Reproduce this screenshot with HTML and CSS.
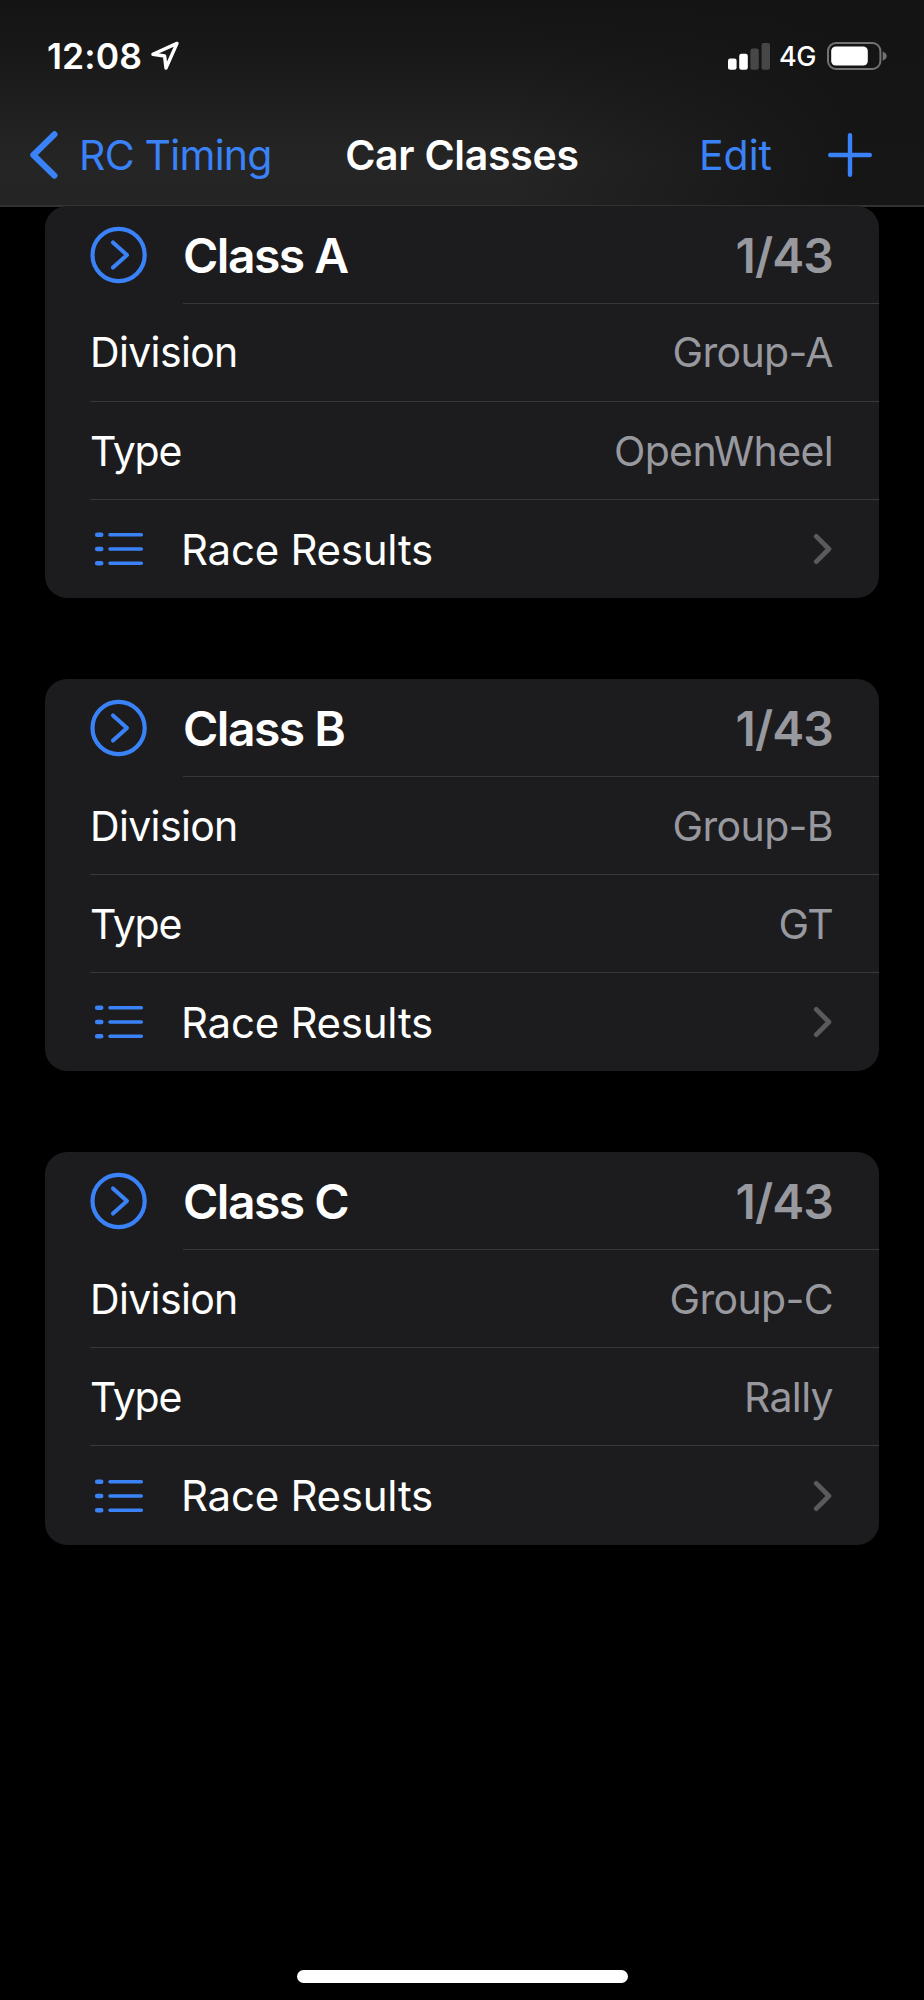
FILE: index.html
```html
<!DOCTYPE html>
<html lang="en">
<head>
<meta charset="utf-8">
<title>Car Classes</title>
<link rel="stylesheet" href="styles.css">
</head>
<body>
<svg class="symbols" aria-hidden="true">
  <symbol id="go" viewBox="0 0 58 58"><circle cx="28.6" cy="29" r="26.1" stroke-width="4.2"/><path d="M23 16.4 37 29 23 41.6" stroke-width="4"/></symbol>
  <symbol id="list" viewBox="0 0 50 36"><path d="M3.2 3.7h4M3.2 18h4M3.2 32.3h4" stroke-width="4.6"/><path d="M16 3.7h31.3M16 18h31.3M16 32.3h31.3" stroke-width="3.6"/></symbol>
  <symbol id="more" viewBox="0 0 20 32"><path d="M3.3 3.4 15.9 16 3.3 28.6" stroke-width="4.8"/></symbol>
</svg>
<div class="screen">
  <header class="header">
    <div class="status">
      <div class="status-left">
        <span class="time">12:08</span>
        <svg class="location" viewBox="0 0 30 30"><path d="M27 2.4 2.9 13.2 14.6 15 16 27Z"/></svg>
      </div>
      <div class="status-right">
        <svg class="signal" viewBox="0 0 42 27"><g fill="#fff"><rect x="0" y="15.6" width="8.6" height="11.2" rx="2.2"/><rect x="11.2" y="10.8" width="8.6" height="16" rx="2.2"/></g><g fill="#474747"><rect x="22.4" y="5.6" width="8.4" height="21.2" rx="2.2"/><rect x="33.6" y="0" width="8.4" height="26.8" rx="2.2"/></g></svg>
        <span class="network">4G</span>
        <svg class="battery" viewBox="0 0 60 28"><rect x="1" y="1" width="52.4" height="26" rx="8" fill="none" stroke="#737373" stroke-width="2"/><rect x="4.2" y="4.4" width="36.6" height="19.2" rx="4.6" fill="#fff"/><path d="M55.7 9.4q4 1.8 4 4.7t-4 4.7z" fill="#737373"/></svg>
      </div>
    </div>
    <nav class="nav">
      <a class="back"><svg class="back-icon" viewBox="0 0 30 48"><path d="M25.4 3.4 4.4 24 25.4 44.6"/></svg><span>RC Timing</span></a>
      <h1 class="title">Car Classes</h1>
      <div class="actions"><a class="edit">Edit</a><svg class="plus" viewBox="0 0 44 44"><path d="M22 2.2v39.6M2.2 22h39.6"/></svg></div>
    </nav>
  </header>
  <main class="list">
    <section class="card">
      <div class="row head"><svg class="go"><use href="#go"/></svg><div class="cell"><b>Class A</b><b class="value">1/43</b></div></div>
      <div class="row"><div class="cell"><span class="division">Division</span><span class="value">Group-A</span></div></div>
      <div class="row"><div class="cell"><span class="type">Type</span><span class="value">OpenWheel</span></div></div>
      <div class="row"><div class="cell results"><svg class="lines"><use href="#list"/></svg><span>Race Results</span><svg class="more"><use href="#more"/></svg></div></div>
    </section>
    <section class="card">
      <div class="row head"><svg class="go"><use href="#go"/></svg><div class="cell"><b>Class B</b><b class="value">1/43</b></div></div>
      <div class="row"><div class="cell"><span class="division">Division</span><span class="value">Group-B</span></div></div>
      <div class="row"><div class="cell"><span class="type">Type</span><span class="value">GT</span></div></div>
      <div class="row"><div class="cell results"><svg class="lines"><use href="#list"/></svg><span>Race Results</span><svg class="more"><use href="#more"/></svg></div></div>
    </section>
    <section class="card">
      <div class="row head"><svg class="go"><use href="#go"/></svg><div class="cell"><b>Class C</b><b class="value">1/43</b></div></div>
      <div class="row"><div class="cell"><span class="division">Division</span><span class="value">Group-C</span></div></div>
      <div class="row"><div class="cell"><span class="type">Type</span><span class="value">Rally</span></div></div>
      <div class="row"><div class="cell results"><svg class="lines"><use href="#list"/></svg><span>Race Results</span><svg class="more"><use href="#more"/></svg></div></div>
    </section>
  </main>
  <div class="home"></div>
</div>
</body>
</html>
```
FILE: styles.css
```css
* { box-sizing: border-box; }
body {
  margin: 0;
  background: #000;
  color: #fff;
  font-family: Inter, "Liberation Sans", sans-serif;
  font-size: 41px;
  letter-spacing: -0.65px;
}
svg { flex: none; fill: none; stroke-linecap: round; stroke-linejoin: round; }
.symbols { display: none; }
.screen { height: 2000px; display: flex; flex-direction: column; overflow: hidden; }

.header {
  height: 207px;
  flex: none;
  border-bottom: 2px solid #323233;
  background:
    linear-gradient(90deg, rgba(20, 20, 20, 0) 55%, rgba(20, 20, 20, 0.9) 92%),
    linear-gradient(180deg, #141414 0, #171717 40px, #252525 160px, #242424 205px);
}
.status {
  height: 112px;
  padding: 0 37px 0 47px;
  display: flex;
  justify-content: space-between;
  align-items: center;
}
.status-left, .status-right { display: flex; align-items: center; }
.time { font-size: 35.5px; font-weight: 600; letter-spacing: 0.1px; }
.location { width: 30px; height: 30px; margin-left: 8px; }
.location path { stroke: #fff; stroke-width: 3.4; }
.signal { width: 42px; height: 27px; }
.network { font-size: 27px; font-weight: 500; letter-spacing: -0.5px; margin-left: 9px; }
.battery { width: 60px; height: 28px; margin-left: 11px; }
.nav {
  height: 86px;
  padding: 0 29px;
  display: grid;
  grid-template-columns: minmax(0, 1fr) auto minmax(0, 1fr);
  align-items: center;
}
.back, .edit { color: #3a82f7; }
.back { display: flex; align-items: center; gap: 20px; letter-spacing: -0.75px; white-space: nowrap; }
.back-icon { width: 30px; height: 48px; }
.back-icon path { stroke: #3a82f7; stroke-width: 6.2; }
.title { margin: 0; font-size: 41px; font-weight: 600; letter-spacing: -0.27px; }
.actions { display: flex; justify-content: flex-end; align-items: center; gap: 56px; padding-right: 23px; }
.edit { letter-spacing: 0; }
.plus { width: 44px; height: 44px; }
.plus path { stroke: #3a82f7; stroke-width: 4.4; }

.list { padding: 0 45px; display: flex; flex-direction: column; gap: 80.6px; margin-top: -1.4px; }
.card { height: 392.6px; border-radius: 22px; background: #1c1c1e; display: flex; flex-direction: column; }
.row { flex: 1; padding-left: 45px; display: flex; align-items: center; }
.cell {
  flex: 1;
  align-self: stretch;
  padding-right: 46px;
  display: flex;
  align-items: center;
  justify-content: space-between;
  border-bottom: 1.5px solid #38383a;
}
.division { letter-spacing: -0.65px; }
.type { letter-spacing: -1.2px; }
.results { border-bottom: 0; font-size: 42px; letter-spacing: -0.25px; }
.head { font-size: 48px; }
.head .cell { padding-top: 2px; }
.head b { font-weight: 600; letter-spacing: -1.5px; }
.head .value { letter-spacing: -0.9px; }
.value { color: #98989f; }
.go { width: 58px; height: 58px; margin-right: 35px; stroke: #3a82f7; }
.lines { width: 50px; height: 36px; margin: 0 37px 0 4px; stroke: #3a82f7; }
.more { width: 20px; height: 32px; margin-left: auto; stroke: #5a5a5e; }

.home { width: 331px; height: 12.5px; margin: auto auto 17.5px; border-radius: 7px; background: #fff; }
```
